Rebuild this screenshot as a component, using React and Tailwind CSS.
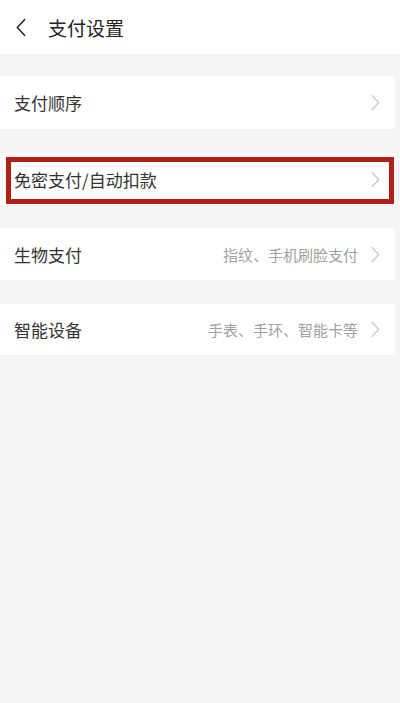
const font = { fontFamily: '"Noto Sans CJK SC", "Noto Sans", sans-serif' };

function Chevron({ className }) {
  return (
    <svg viewBox="0 0 10 18" className={className} fill="none" stroke="currentColor" strokeWidth="1.4" strokeLinecap="round" strokeLinejoin="round">
      <path d="M1.5 1.5 L8.5 9 L1.5 16.5" />
    </svg>
  );
}

function Row({ title, hint, h, highlight }) {
  return (
    <div className={`relative bg-white flex items-center justify-between pl-[14px] pr-[15px] mr-[5px] ${h}`}>
      <span className="text-[17px] text-[#333333] leading-none">{title}</span>
      <div className="flex items-center gap-[13px]">
        {hint && <span className="text-[15px] text-[#a0a0a0] leading-none">{hint}</span>}
        <Chevron className="w-[9px] h-[17px] text-[#c6c6c6]" />
      </div>
      {highlight && (
        <div className="absolute left-[6px] right-[1px] top-[4px] bottom-[1px] border-[5px] border-[#b21f17]" />
      )}
    </div>
  );
}

export default function App() {
  return (
    <div className="w-[400px] h-[703px] bg-[#f5f5f5] flex flex-col" style={font}>
      <header className="h-[54px] bg-white flex items-center pl-[15px]">
        <Chevron className="w-[12px] h-[19px] text-[#222222] rotate-180" />
        <h1 className="ml-[21px] text-[19px] text-[#222222] leading-none">支付设置</h1>
      </header>
      <div className="h-[22px]" />
      <Row title="支付顺序" h="h-[53px]" />
      <div className="h-[24px]" />
      <Row title="免密支付/自动扣款" h="h-[52px]" highlight />
      <div className="h-[23px]" />
      <Row title="生物支付" hint="指纹、手机刷脸支付" h="h-[52px]" />
      <div className="h-[24px]" />
      <Row title="智能设备" hint="手表、手环、智能卡等" h="h-[51px]" />
    </div>
  );
}
